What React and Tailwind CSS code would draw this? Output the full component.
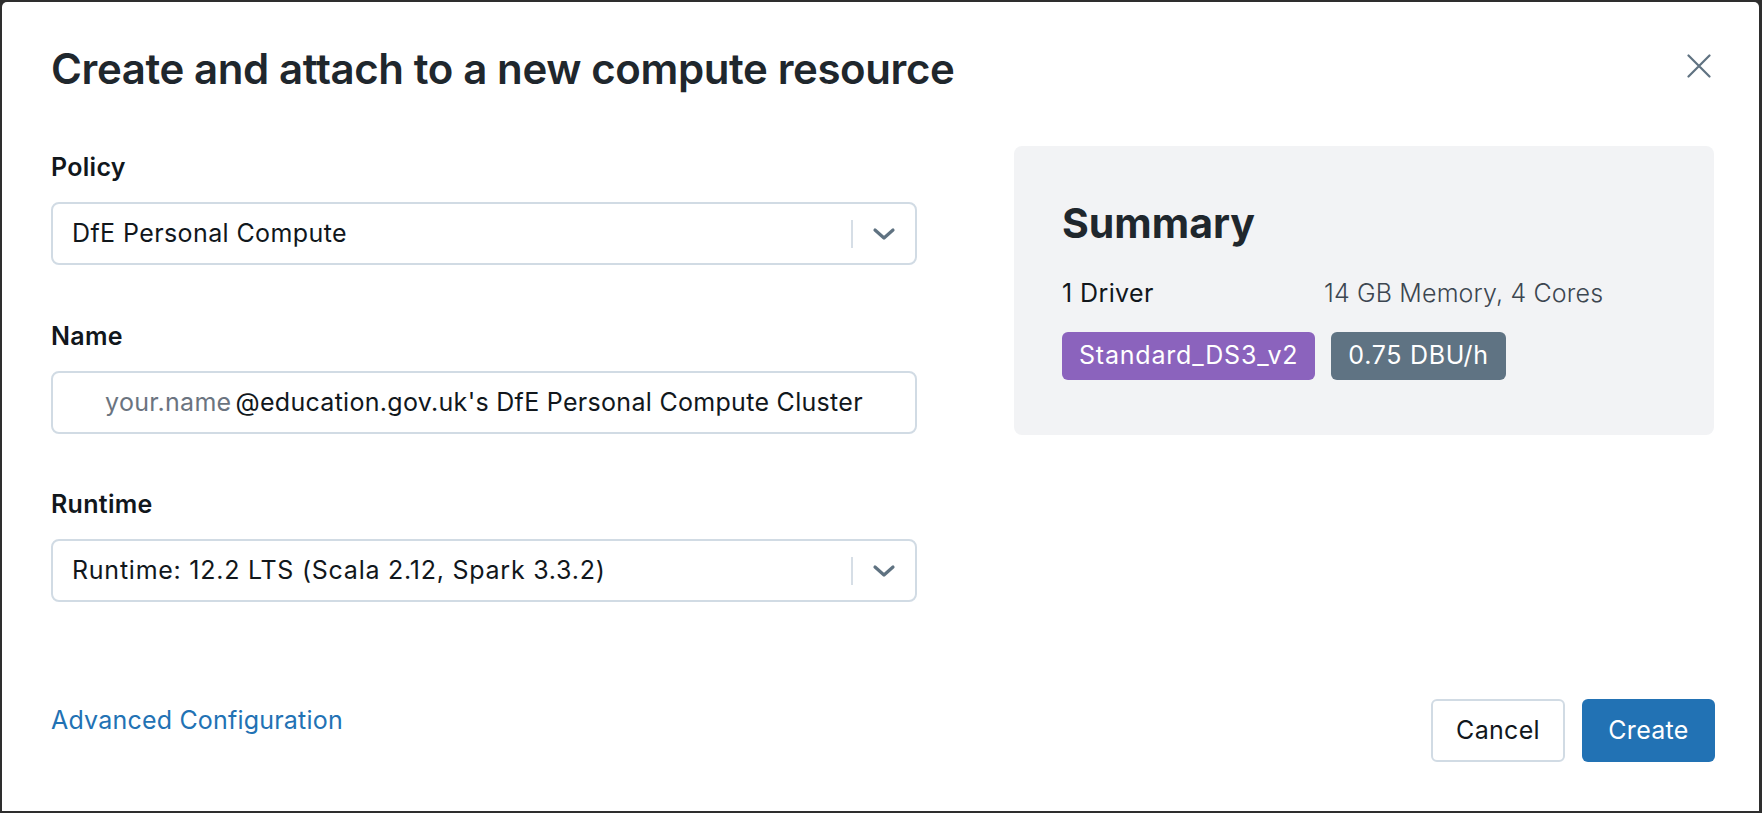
function Chevron() {
  return (
    <svg width="24" height="14" viewBox="0 0 24 14" fill="none" className="text-[#5f7281]">
      <path d="M3 3l9 8 9-8" stroke="currentColor" strokeWidth="3.2" strokeLinecap="round" strokeLinejoin="round" />
    </svg>
  );
}

function Select({ value, tracking = "tracking-[0.4px]" }) {
  return (
    <div className="h-[63px] flex items-center rounded-[8px] border-2 border-[#d1dbe4] pl-[19px] pr-[19px]">
      <span className={"flex-1 text-[25px] text-[#11171c] " + tracking}>{value}</span>
      <span className="w-[2px] h-[28px] bg-[#d6dee6] mr-[19px]" />
      <Chevron />
    </div>
  );
}

function Field({ label, children, className = "" }) {
  return (
    <div className={className}>
      <label className="block text-[25px] leading-[32px] tracking-[0.3px] font-semibold text-[#11171c] mb-[19px]">{label}</label>
      {children}
    </div>
  );
}

export default function App() {
  return (
    <div className="w-[1762px] h-[813px] bg-[#2e2e2e] pt-[2px] pl-[2px] pr-[3px] pb-[2px] font-[Inter,sans-serif]">
      <div className="h-full bg-white rounded-tl-[5px] rounded-tr-[5px] flex flex-col pl-[49px] pr-[44px]">
        <div className="mt-[38px] h-[52px] flex items-center justify-between">
          <h1 className="mt-[6px] text-[42px] leading-[52px] font-semibold text-[#1f272d] tracking-[-0.4px]">Create and attach to a new compute resource</h1>
          <button type="button" className="mr-[4px] text-[#5f7281]">
            <svg width="24" height="24" viewBox="0 0 24 24" fill="none">
              <path d="M1.5 1.5l21 21M22.5 1.5l-21 21" stroke="currentColor" strokeWidth="2.2" strokeLinecap="round" />
            </svg>
          </button>
        </div>

        <div className="mt-[54px] flex gap-[97px]">
          <div className="w-[866px] pt-[5px]">
            <Field label="Policy">
              <Select value="DfE Personal Compute" />
            </Field>
            <Field label="Name" className="mt-[55px]">
              <div className="h-[63px] flex items-center justify-center rounded-[8px] border-2 border-[#d1dbe4] text-[25px] tracking-[0.3px]">
                <span className="text-[#6b7480] mr-[4px]">your.name</span>
                <span className="text-[#11171c]">@education.gov.uk's DfE Personal Compute Cluster</span>
              </div>
            </Field>
            <Field label="Runtime" className="mt-[54px]">
              <Select value="Runtime: 12.2 LTS (Scala 2.12, Spark 3.3.2)" tracking="tracking-[0.75px]" />
            </Field>
          </div>

          <div className="w-[700px] h-[289px] bg-[#f2f3f5] rounded-[8px] pt-[52px] pl-[48px]">
            <h2 className="text-[41px] leading-[50px] font-bold text-[#1f272d]">Summary</h2>
            <div className="mt-[29px] flex text-[25px] leading-[32px]">
              <span className="w-[262px] text-[#11171c] tracking-[0.4px]">1 Driver</span>
              <span className="font-light text-[#3c4650] tracking-[0.15px]">14 GB Memory, 4 Cores</span>
            </div>
            <div className="mt-[23px] flex gap-[16px]">
              <span className="h-[48px] flex items-center px-[17px] rounded-[6px] bg-[#8b63bd] text-white text-[25px] tracking-[0.8px]">Standard_DS3_v2</span>
              <span className="h-[48px] flex items-center px-[17px] rounded-[6px] bg-[#5f7383] text-white text-[25px] tracking-[0.7px]">0.75 DBU/h</span>
            </div>
          </div>
        </div>

        <div className="mt-auto pb-[49px] flex items-start justify-between">
          <a href="#" className="mt-[5px] text-[25px] leading-[32px] tracking-[0.2px] text-[#2272b4]">Advanced Configuration</a>
          <div className="flex gap-[17px]">
            <button type="button" className="h-[63px] w-[134px] rounded-[6px] border-2 border-[#d1dbe4] text-[25px] tracking-[0.3px] text-[#11171c] bg-white">Cancel</button>
            <button type="button" className="h-[63px] w-[133px] rounded-[6px] bg-[#2272b4] text-[25px] tracking-[0.3px] text-white">Create</button>
          </div>
        </div>
      </div>
    </div>
  );
}
